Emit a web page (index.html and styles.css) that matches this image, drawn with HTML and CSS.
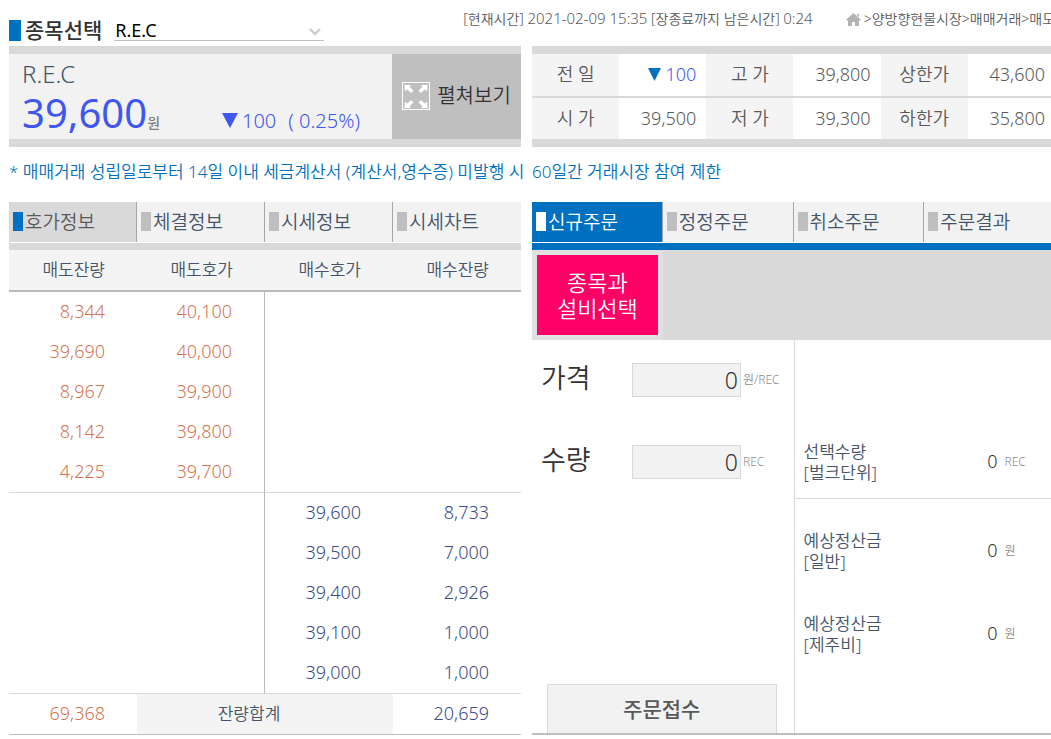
FILE: index.html
```html
<!DOCTYPE html>
<html lang="ko">
<head>
<meta charset="utf-8">
<title>양방향현물시장</title>
<link rel="stylesheet" href="styles.css">
</head>
<body>
<div class="page">
  <header class="topbar">
    <label class="picker-label" for="item"><span class="marker"></span>종목선택</label>
    <div class="picker">
      <select id="item" class="picker-select"><option>R.E.C</option></select>
      <svg class="picker-arrow" width="14" height="10" viewBox="0 0 14 10"><path d="M2 2l5 5 5-5" fill="none" stroke="#ccc" stroke-width="2.4"/></svg>
    </div>
    <p class="clock">[현재시간] <span class="time">2021-02-09 15:35</span> [장종료까지 남은시간] <span class="time">0:24</span></p>
    <nav class="path">
      <svg class="home" width="15" height="13" viewBox="0 0 15 13"><path d="M7.500 0L15 6.800l-1 1-1-.6V13H9V9H6v4H2V7.200l-1 .6-1-1zM11 1h2v3l-2-2z" fill="#b3b3b3"/></svg>
      <span>&gt;양방향현물시장&gt;매매거래&gt;매도주문</span>
    </nav>
  </header>

  <main class="board">
    <section class="quote">
      <div class="quote-main">
        <h1 class="quote-name">R.E.C</h1>
        <div class="quote-line">
          <p class="quote-price">39,600<span class="won">원</span></p>
          <p class="quote-change"><svg width="16" height="15" viewBox="0 0 16 15"><path d="M0 0h16L8 15z" fill="#3f57ef"/></svg><span>100</span><span class="rate">( 0.25%)</span></p>
        </div>
      </div>
      <button class="expand" type="button">
        <svg width="28" height="28" viewBox="0 0 28 28"><rect x=".5" y=".5" width="27" height="27" fill="none" stroke="#fff"/><g fill="#fff"><path d="M2.500 3H9L7.500 4.800 11.500 8.500 9 11 5 7.200 3 9.500z"/><path d="M25.500 3H19L20.500 4.800 16.500 8.500 19 11 23 7.200 25 9.500z"/><path d="M2.500 26H9L7.500 24.200 11.500 20.500 9 18 5 21.800 3 19.500z"/><path d="M25.500 26H19L20.500 24.200 16.500 20.500 19 18 23 21.800 25 19.500z"/></g></svg>
        펼쳐보기
      </button>
    </section>

    <table class="stats">
      <tr><th>전 일</th><td class="down"><svg width="13" height="13" viewBox="0 0 13 13"><path d="M0 0h13L6.500 13z" fill="#0070c0"/></svg> 100</td><th>고 가</th><td>39,800</td><th>상한가</th><td>43,600</td></tr>
      <tr><th>시 가</th><td>39,500</td><th>저 가</th><td>39,300</td><th>하한가</th><td>35,800</td></tr>
    </table>

    <p class="notice">* 매매거래 성립일로부터 14일 이내 세금계산서 (계산서,영수증) 미발행 시</p>
    <p class="notice">60일간 거래시장 참여 제한</p>

    <section class="book">
      <nav class="tabs">
        <button type="button" class="tab tab-on"><span class="mark"></span>호가정보</button>
        <button type="button" class="tab"><span class="mark"></span>체결정보</button>
        <button type="button" class="tab"><span class="mark"></span>시세정보</button>
        <button type="button" class="tab"><span class="mark"></span>시세차트</button>
      </nav>
      <table class="depth">
        <thead><tr><th>매도잔량</th><th>매도호가</th><th>매수호가</th><th>매수잔량</th></tr></thead>
        <tbody class="asks">
          <tr><td>8,344</td><td>40,100</td><td></td><td></td></tr>
          <tr><td>39,690</td><td>40,000</td><td></td><td></td></tr>
          <tr><td>8,967</td><td>39,900</td><td></td><td></td></tr>
          <tr><td>8,142</td><td>39,800</td><td></td><td></td></tr>
          <tr><td>4,225</td><td>39,700</td><td></td><td></td></tr>
        </tbody>
        <tbody class="bids">
          <tr><td></td><td></td><td>39,600</td><td>8,733</td></tr>
          <tr><td></td><td></td><td>39,500</td><td>7,000</td></tr>
          <tr><td></td><td></td><td>39,400</td><td>2,926</td></tr>
          <tr><td></td><td></td><td>39,100</td><td>1,000</td></tr>
          <tr><td></td><td></td><td>39,000</td><td>1,000</td></tr>
        </tbody>
        <tfoot><tr><td class="ask-sum">69,368</td><th colspan="2">잔량합계</th><td class="bid-sum">20,659</td></tr></tfoot>
      </table>
    </section>

    <section class="order">
      <nav class="tabs tabs-order">
        <button type="button" class="tab tab-on"><span class="mark"></span>신규주문</button>
        <button type="button" class="tab"><span class="mark"></span>정정주문</button>
        <button type="button" class="tab"><span class="mark"></span>취소주문</button>
        <button type="button" class="tab"><span class="mark"></span>주문결과</button>
      </nav>
      <div class="target">
        <div class="target-cell"><button type="button" class="target-pick">종목과<br>설비선택</button></div>
      </div>
      <form class="ticket">
        <div class="entry">
          <div class="field"><label for="price">가격</label><input id="price" value="0"><span class="unit">원/REC</span></div>
          <div class="field"><label for="qty">수량</label><input id="qty" value="0"><span class="unit">REC</span></div>
          <button type="button" class="submit">주문접수</button>
        </div>
        <div class="summary">
          <div class="sum sum-first"><span class="sum-label">선택수량<br>[벌크단위]</span><span class="sum-value">0</span><span class="unit">REC</span></div>
          <div class="sum"><span class="sum-label">예상정산금<br>[일반]</span><span class="sum-value">0</span><span class="unit">원</span></div>
          <div class="sum"><span class="sum-label">예상정산금<br>[제주비]</span><span class="sum-value">0</span><span class="unit">원</span></div>
        </div>
      </form>
    </section>
  </main>
</div>
</body>
</html>
```
FILE: styles.css
```css
* { box-sizing: border-box; }
body {
  margin: 0;
  overflow: hidden;
  background: #fff;
  color: #595959;
  font: 350 18px/24px "Noto Sans", "Noto Sans CJK KR", sans-serif;
}
h1, p { margin: 0; font-weight: 350; }
button, input, select { font: inherit; color: inherit; border: 0; padding: 0; margin: 0; border-radius: 0; background: none; }
button { cursor: pointer; }
table { border-collapse: collapse; table-layout: fixed; width: 100%; }
th, td { font-weight: 350; padding: 0; }

.page { margin: 0 -4px 0 9px; }

.topbar { display: flex; height: 46px; align-items: flex-start; white-space: nowrap; }
.picker-label { display: flex; align-items: center; gap: 4px; padding-top: 18px; color: #333; font-size: 21px; font-weight: 500; }
.marker { width: 12px; height: 21px; background: #0070c0; }
.picker { position: relative; width: 210px; margin: 18px 0 0 12px; border-bottom: 1px solid #bfbfbf; }
.picker-select { appearance: none; display: block; width: 100%; height: 22px; padding-left: 1px; color: #000; font-size: 18px; font-weight: 400; outline: 0; }
.picker-arrow { position: absolute; right: 2px; top: 9px; pointer-events: none; }
.clock, .path { margin-top: 13px; height: 14px; line-height: 11px; font-size: 14px; overflow: hidden; color: #595959; }
.clock { margin-left: 139px; flex: none; }
.time { font-size: 15px; }
.path { display: flex; gap: 3px; margin-left: 33px; flex: 1; line-height: 12px; }
.home { flex: none; }

.board { display: grid; grid-template-columns: minmax(0, 512fr) minmax(0, 523fr); column-gap: 11px; }

.quote { display: flex; height: 101px; border: solid #d9d9d9; border-width: 8px 0; background: #f2f2f2; }
.quote-main { flex: 1; padding-left: 13px; }
.quote-name { font-size: 24px; line-height: 28px; padding-top: 6px; color: #44546a; }
.quote-line { display: flex; align-items: baseline; margin-top: 4px; color: #3f57ef; }
.quote-price { width: 200px; font-size: 40px; font-weight: 400; line-height: 42px; }
.won { font-size: 14px; font-weight: 500; color: #7f7f7f; }
.quote-change { font-size: 20px; display: flex; align-items: baseline; gap: 4px; }
.rate { margin-left: 8px; }
.expand { display: flex; align-items: center; justify-content: center; gap: 7px; width: 129px; padding-bottom: 2px; background: #bfbfbf; color: #333; font-size: 20px; }

.stats { border: solid #d9d9d9; border-width: 8px 0; height: 101px; }
.stats tr + tr { border-top: 2px solid #d9d9d9; }
.stats th { background: #f4f4f4; }
.stats th, .stats td { padding-bottom: 1px; }
.stats td { text-align: right; padding-right: 10px; }
.stats .down { color: #3f57ef; }

.notice { padding: 13px 0 18px; color: #0070c0; font-size: 17px; white-space: nowrap; }

.tabs { display: grid; grid-template-columns: repeat(4, 1fr); padding-bottom: 1px; border-bottom: 7px solid #d9d9d9; height: 48px; }
.tab { display: flex; align-items: center; gap: 2px; padding: 0 0 1px 4px; border-right: 1px solid #a6a6a6; background: #f2f2f2; color: #44546a; font-size: 19px; }
.tab:last-child { border-right: 0; }
.mark { width: 10px; height: 19px; background: #bfbfbf; }
.tab-on { background: #d9d9d9; color: #595959; }
.tab-on .mark { background: #0070c0; }
.tabs-order { border-color: #0070c0; }
.tabs-order .tab-on { background: #0070c0; color: #fff; }
.tabs-order .tab-on .mark { background: #fff; }

.depth { border-collapse: separate; border-spacing: 0; border-bottom: 1px solid #bfbfbf; }
.depth th, .depth td { height: 40px; padding: 0 32px 1px 0; text-align: right; }
.depth td { padding-bottom: 3px; }
.depth th { background: #f4f4f4; color: #44546a; font-size: 17px; }
.depth thead th { height: 42px; border-bottom: 2px solid #b9b9b9; }
.depth tbody td:nth-child(2) { border-right: 1px solid #b9b9b9; }
.depth tbody tr:last-child td { height: 41px; border-bottom: 1px solid #d9d9d9; }
.depth tfoot th { text-align: center; }
.asks, .ask-sum { color: #d67552; }
.bids, .bid-sum { color: #3a4c8a; }

.order { display: flex; flex-direction: column; }
.target { display: flex; background: #d9d9d9; }
.target-cell { width: 25%; padding: 5px; background: #e0e0e0; }
.target-pick { width: 100%; height: 80px; background: #f06; color: #fff; font-size: 22px; line-height: 26px; }
.ticket { flex: 1; display: grid; grid-template-columns: minmax(0, 1fr) minmax(0, 1fr); border-bottom: 2px solid #bfbfbf; }
.entry { display: flex; flex-direction: column; padding: 16px 0 0 9px; }
.field { display: flex; align-items: center; height: 48px; margin-bottom: 34px; }
.field label { width: 91px; padding-bottom: 5px; color: #333; font-size: 27px; }
.field input { width: 109px; height: 34px; padding-right: 2px; border: 1px solid #d9d9d9; background: #f2f2f2; color: #333; font-size: 23px; text-align: right; }
.unit { padding-left: 2px; color: #8c8c8c; font-size: 12px; }
.submit { margin: auto 17px 0 6px; height: 49px; border: 1px solid #d9d9d9; border-bottom: 0; background: #f2f2f2; color: #595959; font-size: 21px; font-weight: 500; }
.summary { border-left: 1px solid #d9d9d9; padding-top: 86px; }
.sum { display: flex; align-items: center; height: 83px; padding-left: 9px; color: #44546a; font-size: 17px; line-height: 21px; }
.sum-first { height: 73px; margin-bottom: 10px; padding-bottom: 1px; border-bottom: 1px solid #d9d9d9; }
.sum-label { width: 166px; }
.sum-value { width: 28px; text-align: right; color: #333; font-size: 18px; }
.sum .unit { padding-left: 7px; }
```
